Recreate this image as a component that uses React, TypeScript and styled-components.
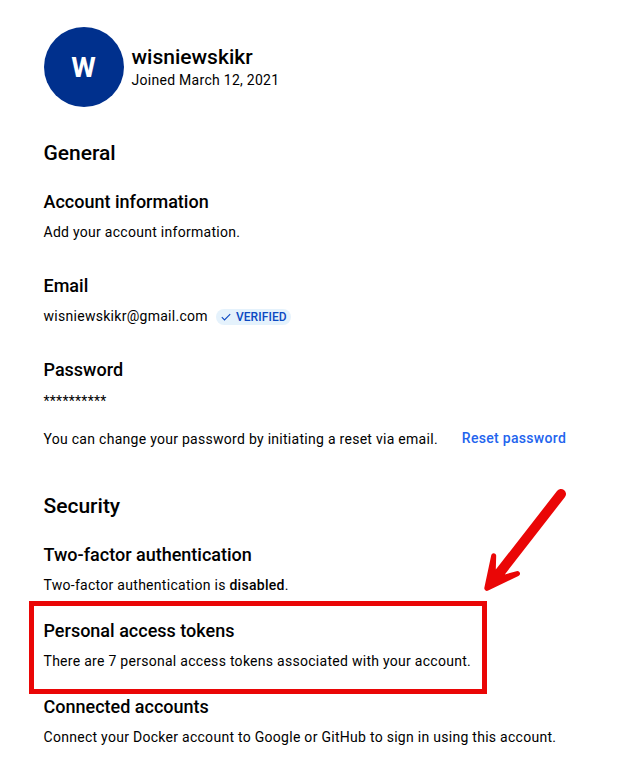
import React from "react";
import styled, { createGlobalStyle } from "styled-components";

const GlobalStyle = createGlobalStyle`
  * { box-sizing: border-box; }
  html, body { margin: 0; background: #fff; overflow: hidden; }
  body { font-family: Roboto, sans-serif; color: #000; }
  h1, h2, h3, p { margin: 0; }
`;

const Page = styled.main`
  position: relative;
  width: 629px;
  height: 766px;
  padding: 27px 43.5px 0;
  background: #fff;
`;

const Profile = styled.header`
  display: flex;
  align-items: center;
  gap: 8px;
  height: 80px;
`;

const Avatar = styled.div`
  display: flex;
  align-items: center;
  justify-content: center;
  width: 80px;
  height: 80px;
  border-radius: 50%;
  background: #00308d;
  color: #fff;
  font-size: 28px;
  font-weight: 700;
`;

const Identity = styled.div`
  padding-top: 2px;
`;

const Username = styled.h1`
  font-size: 21px;
  line-height: 25px;
  font-weight: 500;
`;

const Text = styled.p`
  font-size: 14px;
  line-height: 21px;
  letter-spacing: 0.28px;
  white-space: nowrap;
`;

const MaskedPassword = styled(Text)`
  padding-top: 1px;
  margin-bottom: -1px;
`;

const Section = styled.section<{ $top: number }>`
  margin-top: ${(p) => p.$top}px;
`;

const SectionTitle = styled.h2`
  font-size: 21px;
  line-height: 28px;
  font-weight: 500;
`;

const Item = styled.div<{ $top: number }>`
  margin-top: ${(p) => p.$top}px;
`;

const ItemTitle = styled.h3`
  font-size: 18px;
  line-height: 26px;
  margin-bottom: 7px;
  font-weight: 500;
`;

const Row = styled.div<{ $gap: number; $top?: number }>`
  display: flex;
  align-items: center;
  gap: ${(p) => p.$gap}px;
  height: 21px;
  margin-top: ${(p) => p.$top ?? 0}px;
`;

const Badge = styled.span`
  display: inline-flex;
  align-items: center;
  gap: 4px;
  width: 75px;
  height: 16px;
  margin-top: 1px;
  padding: 0 4px;
  border-radius: 8px;
  background: #e5f2fc;
  color: #0c49c2;
  font-size: 12px;
  font-weight: 500;
  letter-spacing: 0.1px;
`;

const Link = styled.a`
  margin-bottom: 3px;
  color: #2364ee;
  font-size: 14px;
  line-height: 18px;
  font-weight: 500;
  letter-spacing: 0.3px;
  white-space: nowrap;
`;

const Strong = styled.strong`
  font-weight: 500;
`;

const Highlight = styled.div`
  position: absolute;
  left: 29px;
  top: 601px;
  width: 458px;
  height: 93px;
  border: 5px solid #ea0606;
`;

const Arrow = styled.svg`
  position: absolute;
  left: 470px;
  top: 475px;
`;

export default function App() {
  return (
    <>
      <GlobalStyle />
      <Page>
        <Profile>
          <Avatar>W</Avatar>
          <Identity>
            <Username>wisniewskikr</Username>
            <Text>Joined March 12, 2021</Text>
          </Identity>
        </Profile>
        <Section $top={32}>
          <SectionTitle>General</SectionTitle>
          <Item $top={22}>
            <ItemTitle>Account information</ItemTitle>
            <Text>Add your account information.</Text>
          </Item>
          <Item $top={30}>
            <ItemTitle>Email</ItemTitle>
            <Row $gap={8}>
              <Text>wisniewskikr@gmail.com</Text>
              <Badge>
                <svg width="12" height="12" viewBox="0 0 12 12" fill="none" stroke="currentColor" strokeWidth="1.1">
                  <path d="M1.8 6.2 4.5 8.9 10.2 3.1" />
                </svg>
                VERIFIED
              </Badge>
            </Row>
          </Item>
          <Item $top={30}>
            <ItemTitle>Password</ItemTitle>
            <MaskedPassword>**********</MaskedPassword>
            <Row $gap={24} $top={18}>
              <Text>You can change your password by initiating a reset via email.</Text>
              <Link>Reset password</Link>
            </Row>
          </Item>
        </Section>
        <Section $top={42}>
          <SectionTitle>Security</SectionTitle>
          <Item $top={22}>
            <ItemTitle>Two-factor authentication</ItemTitle>
            <Text>
              Two-factor authentication is <Strong>disabled</Strong>.
            </Text>
          </Item>
          <Item $top={22}>
            <ItemTitle>Personal access tokens</ItemTitle>
            <Text>There are 7 personal access tokens associated with your account.</Text>
          </Item>
          <Item $top={22}>
            <ItemTitle>Connected accounts</ItemTitle>
            <Text>Connect your Docker account to Google or GitHub to sign in using this account.</Text>
          </Item>
        </Section>
        <Highlight />
        <Arrow width="110" height="130" fill="#ea0606">
          <path d="M87 16A5 5 0 0 1 95 22L34.8 99.4 46.4 96.2A2.5 2.5 0 0 1 48.4 100.9L18.2 115.5A2.6 2.6 0 0 1 14.4 112.5L21.3 80A2.5 2.5 0 0 1 26.2 80.5L25.8 94.6Z" />
        </Arrow>
      </Page>
    </>
  );
}
